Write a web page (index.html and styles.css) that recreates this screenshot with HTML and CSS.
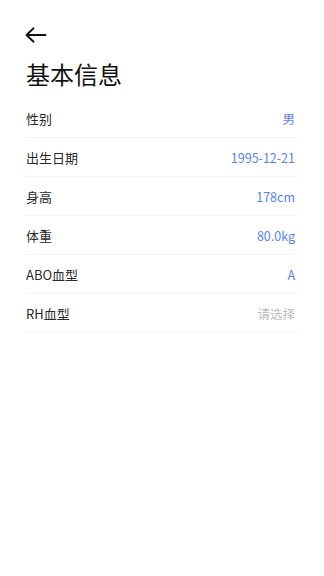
FILE: index.html
```html
<!DOCTYPE html>
<html lang="zh-CN">
<head>
<meta charset="utf-8">
<meta name="viewport" content="width=device-width, initial-scale=1">
<title>基本信息</title>
<link rel="stylesheet" href="styles.css">
</head>
<body>
<div class="page">
  <div class="nav">
    <svg class="back" width="22" height="16" viewBox="0 0 22 16" aria-label="返回">
      <path d="M1.5 8 H20.5 M8.5 1.3 L1.5 8 L8.5 14.7" fill="none" stroke="#111" stroke-width="1.9" stroke-linecap="round" stroke-linejoin="round"/>
    </svg>
  </div>
  <h1 class="title">基本信息</h1>
  <ul class="list">
    <li class="row"><span class="label">性别</span><span class="value">男</span></li>
    <li class="row"><span class="label">出生日期</span><span class="value">1995-12-21</span></li>
    <li class="row"><span class="label">身高</span><span class="value">178cm</span></li>
    <li class="row"><span class="label">体重</span><span class="value">80.0kg</span></li>
    <li class="row"><span class="label">ABO血型</span><span class="value">A</span></li>
    <li class="row"><span class="label">RH血型</span><span class="value placeholder">请选择</span></li>
  </ul>
</div>
</body>
</html>
```
FILE: styles.css
```css
* { box-sizing: border-box; }
html, body {
  margin: 0;
  padding: 0;
  background: #fff;
}
body {
  font-family: "Noto Sans CJK SC", "Noto Sans", sans-serif;
  color: #222;
}
.page {
  padding: 0 27px 0 26px;
}
.nav {
  height: 58px;
  padding-top: 27px;
}
.back {
  display: block;
  margin-left: -1px;
}
.title {
  margin: 0;
  font-size: 24px;
  line-height: 32px;
  font-weight: 400;
  color: #111;
}
.list {
  list-style: none;
  margin: 9px 0 0;
  padding: 0;
}
.row {
  display: flex;
  justify-content: space-between;
  align-items: center;
  height: 39px;
  border-bottom: 1px solid #f3f3f3;
  font-size: 13px;
}
.label {
  color: #2a2a2a;
}
.value {
  color: #5b7ff9;
  font-size: 12.5px;
  padding-right: 2px;
}
.placeholder {
  color: #bdbdbd;
}
```
